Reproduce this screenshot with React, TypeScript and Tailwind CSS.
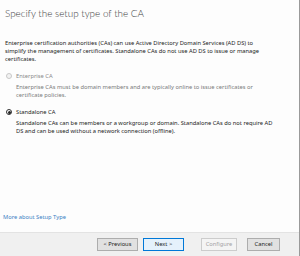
import React from "react";

const font = { fontFamily: '"Noto Sans", "Open Sans", sans-serif' };

function Radio({ checked, disabled }: { checked?: boolean; disabled?: boolean }) {
  return (
    <span
      className={`flex h-[6px] w-[6px] items-center justify-center rounded-full border ${
        disabled ? "border-[#c8c8c8] bg-[#f2f2f2]" : "border-[#333] bg-white"
      }`}
    >
      {checked && <span className="h-[3px] w-[3px] rounded-full bg-[#222]" />}
    </span>
  );
}

export default function App() {
  return (
    <div
      className="flex h-[256px] w-[300px] flex-col overflow-hidden border-r border-[#9a9a9a] bg-[#fdfdfd]"
      style={font}
    >
      <div className="flex flex-1 flex-col pl-[5px]">
        <div className="mt-[5px] whitespace-nowrap text-[9.9px] font-light leading-[16px] text-[#3c3c3c]" style={{ fontFamily: 'Lato, "Open Sans", sans-serif' }}>
          Specify the setup type of the CA
        </div>
        <div className="mt-[18px] whitespace-nowrap text-[5.75px] leading-[8px] text-[#222]">
          <div>Enterprise certification authorities (CAs) can use Active Directory Domain Services (AD DS) to</div>
          <div>simplify the management of certificates. Standalone CAs do not use AD DS to issue or manage</div>
          <div>certificates.</div>
        </div>
        <div className="mt-[9px] flex items-center gap-[4px] pl-[1px] text-[5.75px] leading-[8px] text-[#8a8a8a]">
          <Radio disabled />
          <span className="whitespace-nowrap">Enterprise CA</span>
        </div>
        <div className="mt-[3px] whitespace-nowrap pl-[11px] text-[5.75px] leading-[8px] text-[#7a7a7a]">
          <div>Enterprise CAs must be domain members and are typically online to issue certificates or</div>
          <div>certificate policies.</div>
        </div>
        <div className="mt-[9px] flex items-center gap-[4px] pl-[1px] text-[5.75px] leading-[8px] text-[#222]">
          <Radio checked />
          <span className="whitespace-nowrap">Standalone CA</span>
        </div>
        <div className="mt-[3px] whitespace-nowrap pl-[11px] text-[5.75px] leading-[8px] text-[#222]">
          <div>Standalone CAs can be members or a workgroup or domain. Standalone CAs do not require AD</div>
          <div>DS and can be used without a network connection (offline).</div>
        </div>
        <div className="flex-1" />
        <div className="mb-[11px] -ml-[2px] whitespace-nowrap text-[5.75px] leading-[8px] text-[#3b7fc4]">
          More about Setup Type
        </div>
      </div>
      <div className="flex h-[24px] items-start justify-end border-t border-[#e3e3e3] bg-[#f0f0f0] pr-[19px] pt-[5px] text-[5.75px]">
        <button className="flex h-[13px] w-[41px] items-center justify-center border border-[#adadad] bg-[#e1e1e1] text-[#222]">
          &lt; Previous
        </button>
        <button className="ml-[5px] flex h-[13px] w-[41px] items-center justify-center border border-[#0078d7] bg-[#e5f1fb] text-[#222]">
          Next &gt;
        </button>
        <button className="ml-[17px] flex h-[13px] w-[36px] items-center justify-center border border-[#cccccc] bg-[#f4f4f4] text-[#a3a3a3]">
          Configure
        </button>
        <button className="ml-[10px] flex h-[13px] w-[33px] items-center justify-center border border-[#adadad] bg-[#e1e1e1] text-[#222]">
          Cancel
        </button>
      </div>
    </div>
  );
}
